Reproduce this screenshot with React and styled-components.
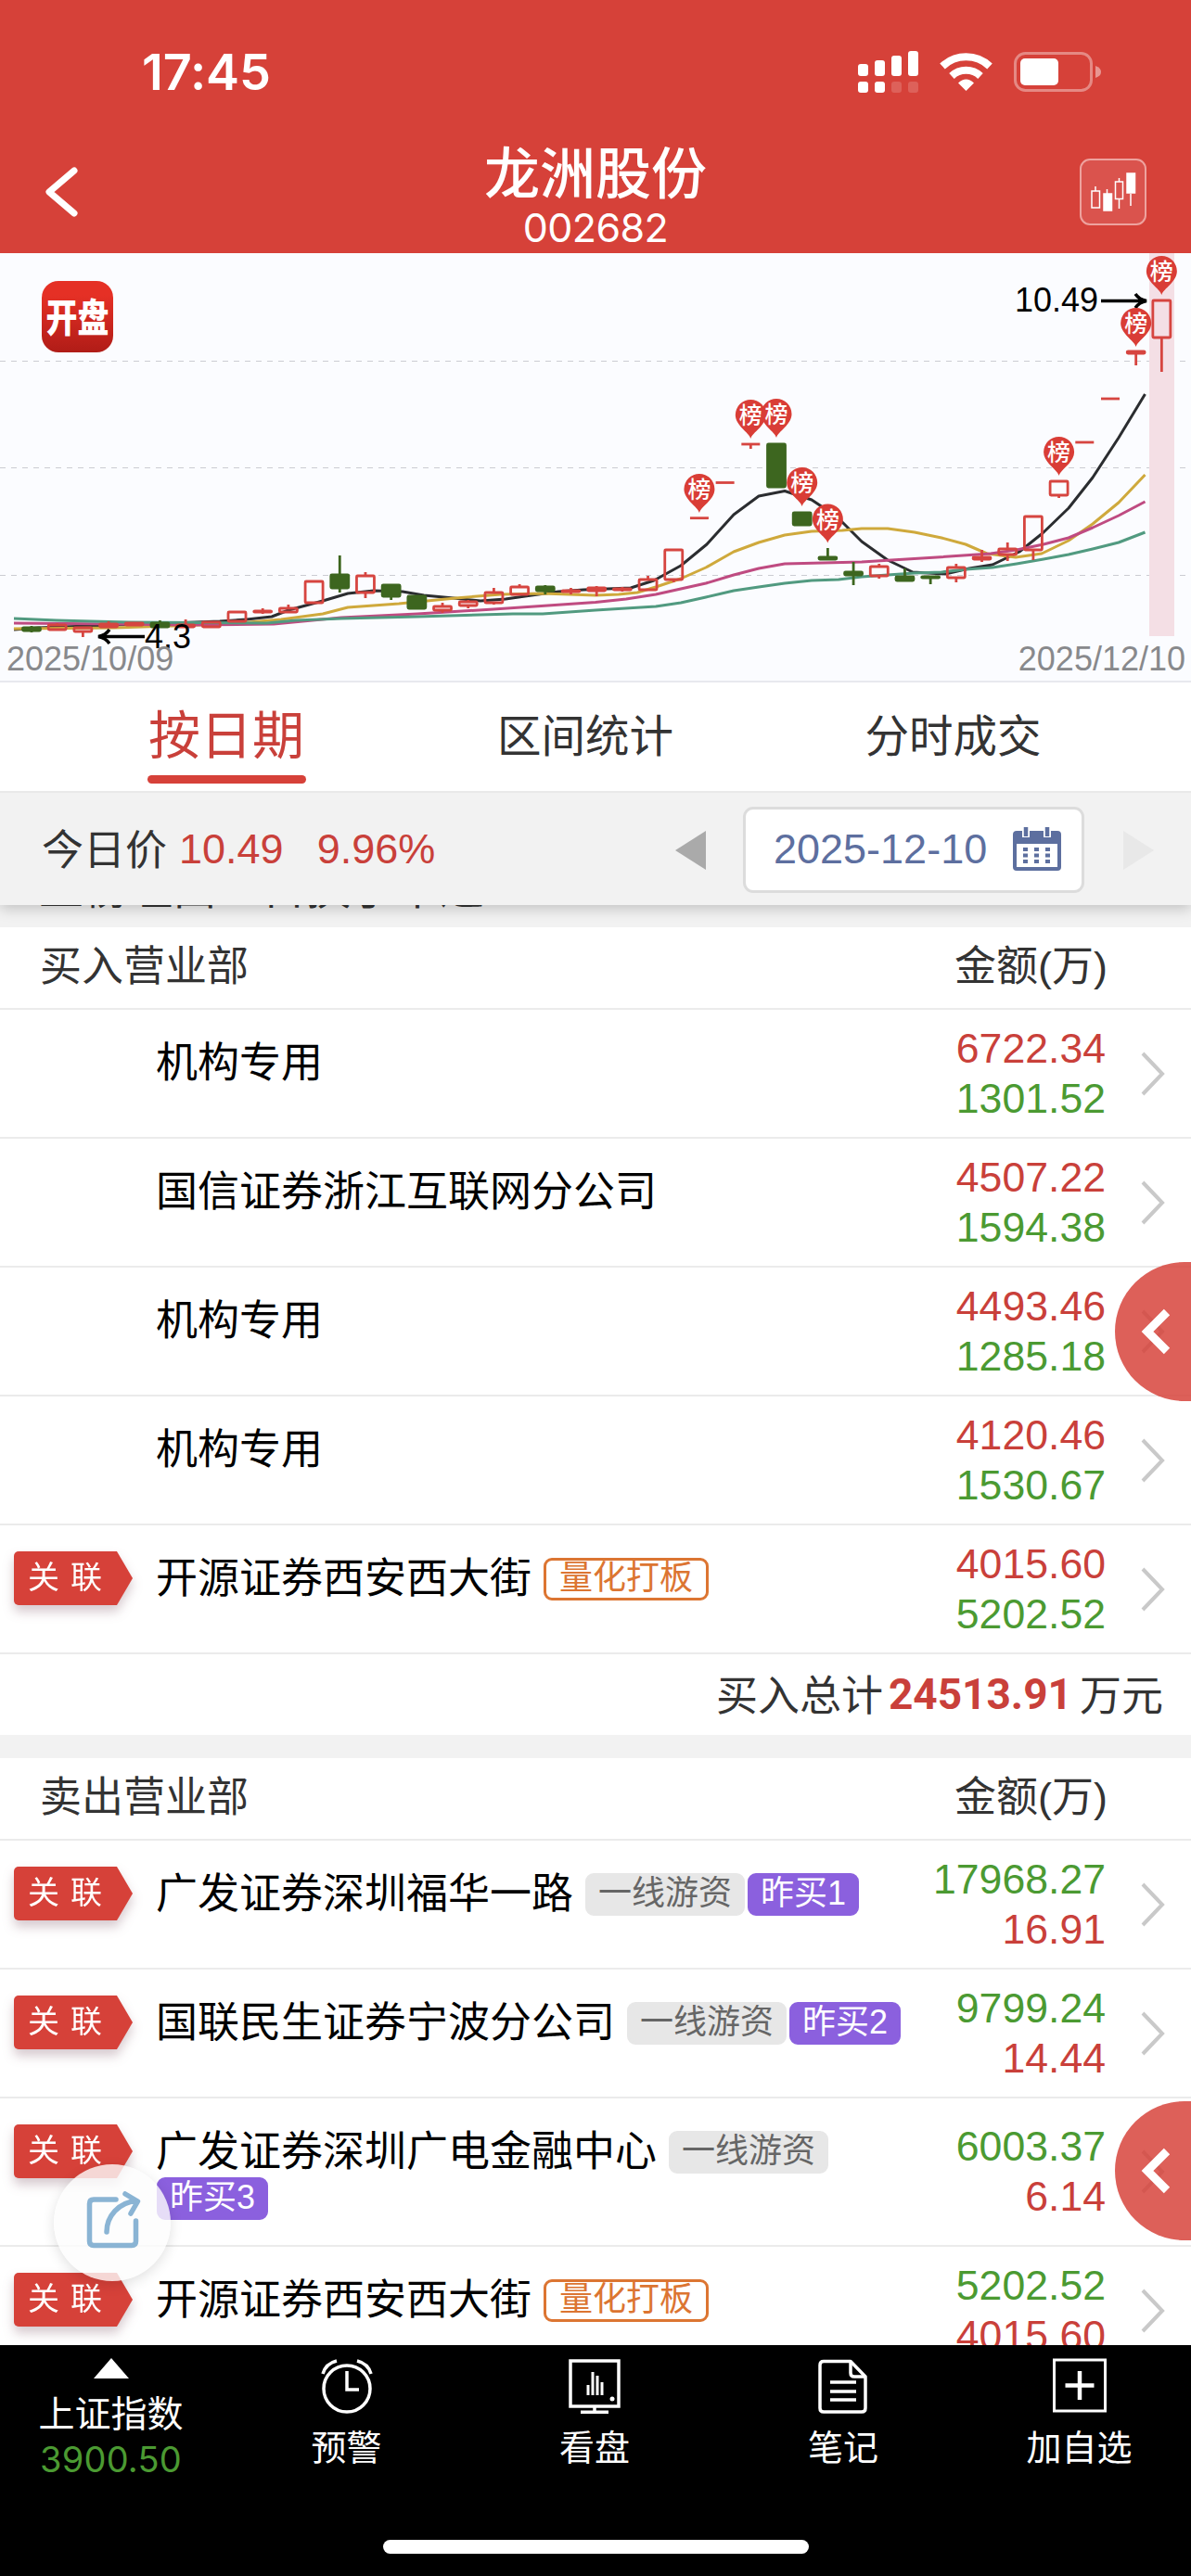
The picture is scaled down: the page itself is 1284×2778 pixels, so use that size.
import React from "react";
import styled, { createGlobalStyle } from "styled-components";

const GlobalStyle = createGlobalStyle`
  * {
    box-sizing: border-box;
  }
  body {
    margin: 0;
    background: #fff;
    font-family: "Liberation Sans", "Noto Sans CJK SC", sans-serif;
  }
`;

const RED = "#d64139";
const PRICE_RED = "#c9403a";
const GREEN = "#4b9a32";

const Screen = styled.div`
  position: relative;
  display: flex;
  flex-direction: column;
  width: 1284px;
  height: 2778px;
  overflow: hidden;
  background: #fff;
`;

/* header */

const Header = styled.header`
  flex: none;
  height: 273px;
  background: ${RED};
  color: #fff;
`;

const StatusBar = styled.div`
  display: flex;
  align-items: center;
  height: 155px;
  padding: 0 97px 0 153px;
`;

const Clock = styled.div`
  flex: 1;
  font-family: Inter, "Liberation Sans", sans-serif;
  font-size: 54px;
  font-weight: 600;
  letter-spacing: -0.1px;
`;

const StatusIcons = styled.svg`
  display: block;
  width: 264px;
  height: 48px;
  margin-bottom: 3px;
`;

const TitleBar = styled.div`
  display: grid;
  grid-template-columns: 160px 1fr 160px;
  align-items: center;
  height: 118px;
`;

const BackIcon = styled.svg`
  width: 42px;
  height: 60px;
  margin: -15px 0 0 45px;
`;

const Title = styled.div`
  display: flex;
  flex-direction: column;
  align-items: center;
  h1 {
    margin: -4px 0 0;
    font-size: 60px;
    font-weight: 500;
    line-height: 68px;
  }
  span {
    font-family: Inter, "Liberation Sans", sans-serif;
    font-size: 43px;
    line-height: 48px;
    letter-spacing: -0.6px;
    margin-top: -2px;
  }
`;

const ChartButton = styled.div`
  width: 72px;
  height: 72px;
  margin: -15px 0 0 40px;
  border: 2px solid #eea29e;
  border-radius: 11px;
  background: #da534d;
  svg {
    display: block;
  }
`;

/* k-line chart */

const ChartPanel = styled.section`
  flex: none;
  height: 463px;
  background: #fbfcff;
  border-bottom: 2px solid #e8e9ee;
  svg {
    display: block;
  }
`;

/* tabs */

const Tabs = styled.nav`
  position: relative;
  z-index: 2;
  flex: none;
  display: grid;
  grid-template-columns: 488px 286px 507px;
  height: 119px;
  background: #fff;
  border-bottom: 2px solid #e9e9e9;
`;

const Tab = styled.div`
  display: flex;
  flex-direction: column;
  align-items: center;
  color: ${(p) => (p.$active ? PRICE_RED : "#333")};
  font-size: ${(p) => (p.$active ? 56 : 47.5)}px;
  line-height: 100px;
  padding-top: ${(p) => (p.$active ? 8 : 9)}px;
  &::after {
    content: "";
    width: 171px;
    height: 9px;
    margin-top: -8px;
    border-radius: 5px;
    background: ${(p) => (p.$active ? RED : "transparent")};
  }
`;

/* price and date */

const PriceBar = styled.div`
  position: relative;
  z-index: 1;
  flex: none;
  display: flex;
  align-items: center;
  height: 121px;
  padding-left: 45px;
  background: #f2f2f2;
  box-shadow: 0 4px 14px rgba(0, 0, 0, 0.2);
  font-size: 45px;
  color: #333;
`;

const PriceLabel = styled.span`
  margin-top: -4px;
`;

const Price = styled.span`
  color: ${PRICE_RED};
  margin-left: ${(p) => p.$gap}px;
`;

const Arrow = styled.i`
  width: 0;
  height: 0;
  border: 21px solid transparent;
  border-left-width: ${(p) => (p.$next ? 33 : 0)}px;
  border-right-width: ${(p) => (p.$next ? 0 : 33)}px;
  border-left-color: #e8e8e8;
  border-right-color: #aaa;
  margin-left: ${(p) => (p.$next ? 42 : 0)}px;
  margin-right: ${(p) => (p.$next ? 40 : 0)}px;
  margin-top: 2px;
`;

const DateBox = styled.div`
  display: flex;
  align-items: center;
  justify-content: space-between;
  width: 368px;
  height: 93px;
  margin: 1px 0 0 40px;
  padding: 0 22px 0 30px;
  border: 3px solid #dcdcdc;
  border-radius: 11px;
  background: #fff;
  color: #5d6f9f;
`;

const Spacer = styled.div`
  flex: 1;
`;

const Reason = styled.div`
  flex: none;
  height: 24px;
  background: #f2f2f2;
  p {
    margin: 0;
    padding-left: 42px;
    color: #333;
    font-size: 48px;
    line-height: 60px;
    margin-top: -47px;
  }
`;

/* lists */

const SectionHead = styled.div`
  flex: none;
  display: flex;
  justify-content: space-between;
  height: 89px;
  padding: 0 90px 0 43px;
  border-bottom: 2px solid #ebebeb;
  color: #333;
  font-size: 45px;
  line-height: 86px;
`;

const Row = styled.div`
  flex: none;
  display: grid;
  grid-template-columns: 168px 825px 199px 92px;
  height: ${(p) => (p.$tall ? 160 : 139)}px;
  border-bottom: 2px solid #ebebeb;
`;

const LinkedTag = styled.div`
  width: 128px;
  height: 58px;
  margin: 28px 0 0 15px;
  filter: drop-shadow(0 7px 6px rgba(90, 40, 60, 0.25));
  span {
    display: block;
    height: 58px;
    padding-left: 15px;
    border-radius: 5px 0 0 5px;
    background: ${RED};
    clip-path: polygon(0 0, 111px 0, 100% 50%, 111px 100%, 0 100%);
    color: #fff;
    font-size: 34px;
    line-height: 57px;
    letter-spacing: 12px;
  }
`;

const Branch = styled.div`
  display: flex;
  flex-wrap: wrap;
  align-content: flex-start;
  align-items: center;
  padding-top: 31px;
  color: #000;
  font-size: 45px;
  line-height: 54px;
`;

const tagColors = {
  outline: { bg: "#fff", fg: "#dc7532", edge: "#dc7532" },
  grey: { bg: "#e7e7e7", fg: "#666", edge: "#e7e7e7" },
  purple: { bg: "#8b60de", fg: "#fff", edge: "#8b60de" },
};

const Tag = styled.span`
  height: 46px;
  margin-left: ${(p) => p.$gap}px;
  padding: 0 ${(p) => (p.$kind === "outline" ? 14 : 11)}px;
  border: 3px solid ${(p) => tagColors[p.$kind].edge};
  border-radius: 9px;
  background: ${(p) => tagColors[p.$kind].bg};
  color: ${(p) => tagColors[p.$kind].fg};
  font-size: 36px;
  line-height: 38px;
`;

const Amounts = styled.div`
  display: flex;
  flex-direction: column;
  justify-content: center;
  align-items: flex-end;
  color: ${(p) => (p.$sell ? GREEN : PRICE_RED)};
  font-size: 44.6px;
  line-height: 54px;
  span + span {
    color: ${(p) => (p.$sell ? PRICE_RED : GREEN)};
  }
`;

const Chevron = styled.svg`
  align-self: center;
  width: 30px;
  height: 50px;
  margin-left: 37px;
`;

const Total = styled.div`
  flex: none;
  display: flex;
  align-items: center;
  justify-content: flex-end;
  height: 87px;
  padding: 0 30px 4px 0;
  color: #333;
  font-size: 45px;
  b {
    margin: 3px 8px 0 6px;
    color: ${PRICE_RED};
    font-family: Roboto, sans-serif;
    font-size: 46px;
  }
`;

const Band = styled.div`
  flex: none;
  height: 25px;
  background: #f2f2f2;
`;

/* floating controls */

const DrawerHandle = styled.div`
  position: absolute;
  right: 0;
  top: ${(p) => p.$top}px;
  width: 82px;
  height: 150px;
  border-radius: 75px 0 0 75px;
  background: rgba(214, 65, 57, 0.84);
  svg {
    display: block;
  }
`;

const ShareButton = styled.div`
  position: absolute;
  left: 58px;
  top: 2334px;
  width: 126px;
  height: 126px;
  border-radius: 50%;
  background: rgba(252, 252, 252, 0.8);
  box-shadow: 0 4px 14px rgba(0, 0, 0, 0.12);
  svg {
    display: block;
  }
`;

/* bottom bar */

const Footer = styled.footer`
  position: absolute;
  left: 0;
  right: 0;
  bottom: 0;
  height: 249px;
  background: #000;
  color: #fff;
`;

const FooterItems = styled.div`
  display: grid;
  grid-template-columns: 239px 269px 266px 270px 239px;
  height: 210px;
`;

const FooterItem = styled.div`
  display: flex;
  flex-direction: column;
  align-items: center;
  padding-top: 14px;
  font-size: 38px;
  line-height: 48px;
  svg {
    display: block;
    margin-bottom: 13px;
  }
`;

const IndexItem = styled(FooterItem)`
  font-size: 39px;
  svg {
    margin-bottom: 15px;
  }
  b {
    color: ${GREEN};
    font: 400 38px/50px Inter, "Liberation Sans", sans-serif;
    letter-spacing: 0.2px;
    margin-top: -1px;
  }
`;

const HomeIndicator = styled.div`
  width: 459px;
  height: 15px;
  margin: 0 auto;
  border-radius: 8px;
  background: #fff;
`;

// [direction, body top, body bottom, high, low]
const candles = [
  ["d", 677, 680, 675, 682],
  ["u", 674, 679, 672, 680],
  ["u", 677, 681, 676, 687],
  ["u", 673, 676, 670, 677],
  ["u", 672, 674, 671, 675],
  ["d", 672, 676, 669, 677],
  ["u", 674, 676, 668, 677],
  ["u", 671, 676, 670, 677],
  ["u", 660, 670, 659, 671],
  ["u", 659, 660, 656, 662],
  ["u", 656, 660, 652, 661],
  ["u", 627, 650, 627, 650],
  ["d", 620, 634, 599, 639],
  ["u", 621, 639, 617, 645],
  ["d", 631, 643, 630, 647],
  ["d", 643, 656, 642, 657],
  ["u", 654, 658, 650, 661],
  ["u", 649, 653, 647, 656],
  ["u", 639, 650, 634, 652],
  ["u", 633, 641, 630, 642],
  ["d", 633, 637, 631, 641],
  ["u", 637, 638, 634, 641],
  ["u", 634, 637, 632, 643],
  ["u", 635, 636, 633, 638],
  ["u", 625, 636, 621, 637],
  ["u", 593, 625, 592, 628],
  ["u", 558.7, 558.7, 558, 559],
  ["u", 520.5, 520.5, 520, 521],
  ["u", 479, 479, 478, 484],
  ["d", 479, 525, 478, 526],
  ["d", 553, 566, 552, 567],
  ["d", 601, 603, 591, 604],
  ["d", 617, 620, 606, 631],
  ["u", 611, 621, 608, 624],
  ["d", 622, 626, 613, 627],
  ["d", 622, 623, 621, 630],
  ["u", 612, 623, 608, 628],
  ["u", 601, 603, 593, 606],
  ["u", 592, 598, 585, 605],
  ["u", 557, 593, 556, 604],
  ["u", 519, 534, 518, 537],
  ["u", 477, 477, 477, 477],
  ["u", 430, 430, 430, 430],
  ["u", 379, 381, 378, 394],
  ["u", 324, 364, 323, 401],
];

const averages = [
  {
    color: "#2b2d30",
    points:
      "15,679 41,677 123,674 184,672 237,670 266,668 293,665 311,658 348,648 375,640 403,637 434,638 457,642 489,645 518,648 545,646 573,642 602,638 629,636 642,635.5 680,634 705,626 734,610 762,587 791,555 818,535 846,529.5 875,539 902,557 929,584 957,604 984,617 1019,619 1045,613 1070,609 1099,595 1124,575 1152,548 1178,515 1206,472 1234.5,425",
  },
  {
    color: "#cfa93c",
    points:
      "15,678 123,677 246,673 303,668 348,662 375,655 430,651 491,645 540,641 585,640 642,642 667,641 687,639 707,633 734,624 761,612 791,595 818,585 846,577 875,573 908,572 929,570 957,570 986,574 1015,580 1041,587 1064,597 1095,601 1123,597 1152,583 1178,565 1206,542 1234.5,512",
  },
  {
    color: "#bf4b81",
    points:
      "15,672 123,673 205,674 295,673 368,666 450,662 532,657 642,649.5 675,646 707,641 734,635 761,629 791,620 818,613 846,608 929,606 961,604 1010,601 1068,597 1096,593 1125,587 1152,580 1178,569 1206,556 1234.5,541",
  },
  {
    color: "#519a80",
    points:
      "15,667 61,669 98,670 139,671 287,672 319,669 368,667 450,665 553,662 585,662 642,658 707,654 734,650 761,644 791,637 818,633 846,629 875,626 904,625 929,622 957,620 986,618 1015,617 1041,614 1070,612 1096,608 1125,603 1152,598 1178,592 1206,585 1234.5,574",
  },
];

// [candle index, top of the pin]
const pins = [
  [26, 511],
  [28, 431],
  [29, 430],
  [30, 504],
  [31, 543.5],
  [40, 471],
  [43, 332],
  [44, 276],
];

const candleX = (i) => 34 + i * 27.69;

const Candle = ({ index, data }) => {
  const [dir, top, bottom, high, low] = data;
  const x = candleX(index);
  const color = dir === "u" ? "#d64540" : "#3d661f";
  const flat = bottom - top < 1;
  return (
    <g stroke={color} strokeWidth="2.8" fill={dir === "u" ? "none" : color}>
      <path d={`M${x} ${high}V${top}M${x} ${bottom}V${low}`} />
      {flat ? (
        <path d={`M${x - 10} ${top}H${x + 10}`} />
      ) : (
        <rect x={x - 9.5} y={top} width="19" height={bottom - top} rx="1" />
      )}
    </g>
  );
};

const Pin = ({ x, y }) => (
  <g>
    <path
      d={`M${x} ${y + 42}C${x - 2} ${y + 35} ${x - 16.5} ${y + 28} ${x - 16.5} ${y + 16.5}a16.5 16.5 0 0 1 33 0C${x + 16.5} ${y + 28} ${x + 2} ${y + 35} ${x} ${y + 42}z`}
      fill="#d93d36"
    />
    <text x={x} y={y + 26} fontSize="25" fontWeight="500" fill="#fff" textAnchor="middle">
      榜
    </text>
  </g>
);

const KLine = () => (
  <ChartPanel>
    <svg width="1284" height="461" viewBox="0 273 1284 461">
      <defs>
        <linearGradient id="logo" x1="0" y1="0" x2="0" y2="1">
          <stop offset="0.2" stopColor="#e53025" />
          <stop offset="1" stopColor="#b01c17" />
        </linearGradient>
      </defs>
      {[389.5, 504.5, 620.5].map((y) => (
        <path key={y} d={`M0 ${y}H1284`} stroke="#cbccd2" strokeDasharray="6 6" />
      ))}
      <rect x="1239" y="273" width="27" height="413" fill="#f4dfe5" />
      <rect x="45" y="303" width="77" height="77" rx="18" fill="url(#logo)" />
      <text
        transform="translate(83.5 357.5) scale(0.97 1.2)"
        fontSize="35"
        fontWeight="900"
        fill="#fff"
        textAnchor="middle"
      >
        开盘
      </text>
      {averages.map((line) => (
        <polyline
          key={line.color}
          points={line.points}
          fill="none"
          stroke={line.color}
          strokeWidth="3"
          strokeLinejoin="round"
        />
      ))}
      {candles.map((data, i) => (
        <Candle key={i} index={i} data={data} />
      ))}
      <g stroke="#000" strokeWidth="3.5" fill="none">
        <path d="M1187 324.5H1236M1224 317q4 6 12 7.5q-8 1.500-12 7.500" />
        <path d="M156 686.500H106M118 679q-4 6-12 7.500q8 1.500 12 7.500" />
      </g>
      {pins.map(([i, y]) => (
        <Pin key={i} x={candleX(i)} y={y} />
      ))}
      <text x="1094" y="336" fontSize="36">10.49</text>
      <text x="156" y="699" fontSize="36">4.3</text>
      <text x="7" y="723" fontSize="36" fill="#88898c">2025/10/09</text>
      <text x="1278" y="723" fontSize="36" fill="#88898c" textAnchor="end">2025/12/10</text>
    </svg>
  </ChartPanel>
);

const CalendarIcon = () => (
  <svg width="52" height="48" viewBox="0 0 52 48">
    <rect x="0" y="4" width="52" height="43" rx="4" fill="#5d6f9f" />
    <rect x="4" y="18" width="44" height="25" fill="#fff" />
    <path d="M14 0v11M37 0v11" stroke="#fff" strokeWidth="8" />
    <path d="M14 0v10M37 0v10" stroke="#5d6f9f" strokeWidth="4.500" />
    <path d="M11 24H42M11 30.500H42M11 37H42" stroke="#5d6f9f" strokeWidth="4" strokeDasharray="5 7" />
  </svg>
);

const buyers = [
  { name: "机构专用", amounts: ["6722.34", "1301.52"] },
  { name: "国信证券浙江互联网分公司", amounts: ["4507.22", "1594.38"] },
  { name: "机构专用", amounts: ["4493.46", "1285.18"] },
  { name: "机构专用", amounts: ["4120.46", "1530.67"] },
  {
    name: "开源证券西安西大街",
    linked: true,
    tags: [["outline", "量化打板"]],
    amounts: ["4015.60", "5202.52"],
  },
];

const sellers = [
  {
    name: "广发证券深圳福华一路",
    linked: true,
    tags: [["grey", "一线游资"], ["purple", "昨买1"]],
    amounts: ["17968.27", "16.91"],
  },
  {
    name: "国联民生证券宁波分公司",
    linked: true,
    tags: [["grey", "一线游资"], ["purple", "昨买2"]],
    amounts: ["9799.24", "14.44"],
  },
  {
    name: "广发证券深圳广电金融中心",
    linked: true,
    tall: true,
    tags: [["grey", "一线游资"], ["purple", "昨买3"]],
    amounts: ["6003.37", "6.14"],
  },
  {
    name: "开源证券西安西大街",
    linked: true,
    tags: [["outline", "量化打板"]],
    amounts: ["5202.52", "4015.60"],
  },
];

const BranchRow = ({ item, sell }) => (
  <Row $tall={item.tall}>
    <div>
      {item.linked && (
        <LinkedTag>
          <span>关联</span>
        </LinkedTag>
      )}
    </div>
    <Branch>
      {item.name}
      {(item.tags || []).map(([kind, label], i) => (
        <Tag key={label} $kind={kind} $gap={i === 0 ? 13 : item.tall ? 1 : 3}>
          {label}
        </Tag>
      ))}
    </Branch>
    <Amounts $sell={sell}>
      <span>{item.amounts[0]}</span>
      <span>{item.amounts[1]}</span>
    </Amounts>
    <Chevron viewBox="0 0 30 50">
      <path d="M3 3L24 25L3 47" fill="none" stroke="#c9c9c9" strokeWidth="4" />
    </Chevron>
  </Row>
);

const Handle = ({ top }) => (
  <DrawerHandle $top={top}>
    <svg width="82" height="150" viewBox="0 0 82 150">
      <path d="M56 54L35 75L56 96" fill="none" stroke="#fff" strokeWidth="9" />
    </svg>
  </DrawerHandle>
);

const App = () => {
  return (
    <Screen>
      <GlobalStyle />
      <Header>
        <StatusBar>
          <Clock>17:45</Clock>
          <StatusIcons viewBox="0 0 264 48" fill="#fff">
            <rect x="2" y="17" width="11" height="13" rx="3" />
            <rect x="20" y="13" width="11" height="17" rx="3" />
            <rect x="38" y="8" width="11" height="22" rx="3" />
            <rect x="56" y="3" width="11" height="27" rx="3" />
            <rect x="2" y="36" width="11" height="12" rx="3" />
            <rect x="20" y="36" width="11" height="12" rx="3" />
            <rect x="38" y="36" width="11" height="12" rx="3" opacity="0.17" />
            <rect x="56" y="36" width="11" height="12" rx="3" opacity="0.17" />
            <g fill="none" stroke="#fff" strokeWidth="8">
              <path d="M93 19.500A37 37 0 0 1 144 19.500" />
              <path d="M103 30A22.500 22.500 0 0 1 134 30" />
            </g>
            <path d="M110 37.500Q118.500 29.500 127 37.500L118.500 46z" />
            <rect x="171.500" y="5.500" width="82" height="40" rx="11" fill="none" stroke="#fff" strokeWidth="3" opacity="0.38" />
            <rect x="177" y="11" width="41" height="29" rx="5" />
            <path d="M258 19q6 2 6 6.500t-6 6.500z" opacity="0.45" />
          </StatusIcons>
        </StatusBar>
        <TitleBar>
          <BackIcon viewBox="0 0 42 60">
            <path d="M35 7L8 30L35 53" fill="none" stroke="#fff" strokeWidth="7" strokeLinecap="round" strokeLinejoin="round" />
          </BackIcon>
          <Title>
            <h1>龙洲股份</h1>
            <span>002682</span>
          </Title>
          <ChartButton>
            <svg width="68" height="68" viewBox="0 0 68 68" stroke="#fff" strokeWidth="1.500" fill="none">
              <path d="M15 28v5M27.500 31v5M40.500 19v4M40.500 42v10M53 36v13" />
              <rect x="11" y="33" width="8.500" height="18" />
              <rect x="24" y="36" width="8.500" height="18" fill="#fff" />
              <rect x="36.500" y="23" width="8" height="18.500" />
              <rect x="49" y="14" width="8.500" height="21" fill="#fff" />
            </svg>
          </ChartButton>
        </TitleBar>
      </Header>
      <KLine />
      <Tabs>
        <Tab $active>按日期</Tab>
        <Tab>区间统计</Tab>
        <Tab>分时成交</Tab>
      </Tabs>
      <PriceBar>
        <PriceLabel>今日价</PriceLabel>
        <Price $gap={13}>10.49</Price>
        <Price $gap={36}>9.96%</Price>
        <Spacer />
        <Arrow />
        <DateBox>
          2025-12-10
          <CalendarIcon />
        </DateBox>
        <Arrow $next />
      </PriceBar>
      <Reason>
        <p>上榜理由：日换手率达20%</p>
      </Reason>
      <SectionHead>
        <span>买入营业部</span>
        <span>金额(万)</span>
      </SectionHead>
      {buyers.map((item, i) => (
        <BranchRow key={i} item={item} />
      ))}
      <Total>
        买入总计<b>24513.91</b>万元
      </Total>
      <Band />
      <SectionHead>
        <span>卖出营业部</span>
        <span>金额(万)</span>
      </SectionHead>
      {sellers.map((item, i) => (
        <BranchRow key={i} item={item} sell />
      ))}
      <Handle top={1361} />
      <Handle top={2266} />
      <ShareButton>
        <svg width="126" height="126" viewBox="0 0 126 126" fill="none" stroke="#8ab4d4" strokeWidth="5.500" strokeLinecap="round" strokeLinejoin="round">
          <path d="M67 38H43q-4.500 0-4.500 4.500V83q0 4.500 4.500 4.500H84q4.500 0 4.500-4.500V61" />
          <path d="M57 73C57 56 70 41 89 39.500M77 32L90.500 40L83 53" />
        </svg>
      </ShareButton>
      <Footer>
        <FooterItems>
          <IndexItem>
            <svg width="38" height="22" viewBox="0 0 38 22">
              <path d="M19 0L38 22H0z" fill="#fff" />
            </svg>
            上证指数
            <b>3900.50</b>
          </IndexItem>
          <FooterItem>
            <svg width="58" height="60" viewBox="0 0 58 60" fill="none" stroke="#fff" strokeWidth="3.500">
              <circle cx="29" cy="33" r="25" />
              <path d="M29 14V34H42" />
              <path d="M3 17Q6 6 18 3M55 17Q52 6 40 3" />
            </svg>
            预警
          </FooterItem>
          <FooterItem>
            <svg width="58" height="60" viewBox="0 0 58 60" fill="none" stroke="#fff" strokeWidth="3.500">
              <rect x="3" y="3" width="52" height="49" />
              <path d="M29 52v6M14 58.200H44" />
              <path d="M22 29V40M27 15V40M32 19V40M37 26V40" strokeWidth="3" />
              <circle cx="48" cy="44" r="2.500" fill="#fff" stroke="none" />
            </svg>
            看盘
          </FooterItem>
          <FooterItem>
            <svg width="58" height="60" viewBox="0 0 58 60" fill="none" stroke="#fff" strokeWidth="3.500" strokeLinejoin="round">
              <path d="M8 3.500H37L53 20V54q0 4-4 4H8q-4 0-4-4V7.500q0-4 4-4z" />
              <path d="M37 4V16q0 4 4 4H53" />
              <path d="M15 26H43M15 36H43M15 45H43" />
            </svg>
            笔记
          </FooterItem>
          <FooterItem>
            <svg width="58" height="60" viewBox="0 0 58 60" fill="none" stroke="#fff" strokeWidth="3">
              <rect x="1.500" y="2" width="55" height="55" />
              <path d="M29 14V45M13.500 29.500H44.500" strokeWidth="4.500" />
            </svg>
            加自选
          </FooterItem>
        </FooterItems>
        <HomeIndicator />
      </Footer>
    </Screen>
  );
};

export default App;
